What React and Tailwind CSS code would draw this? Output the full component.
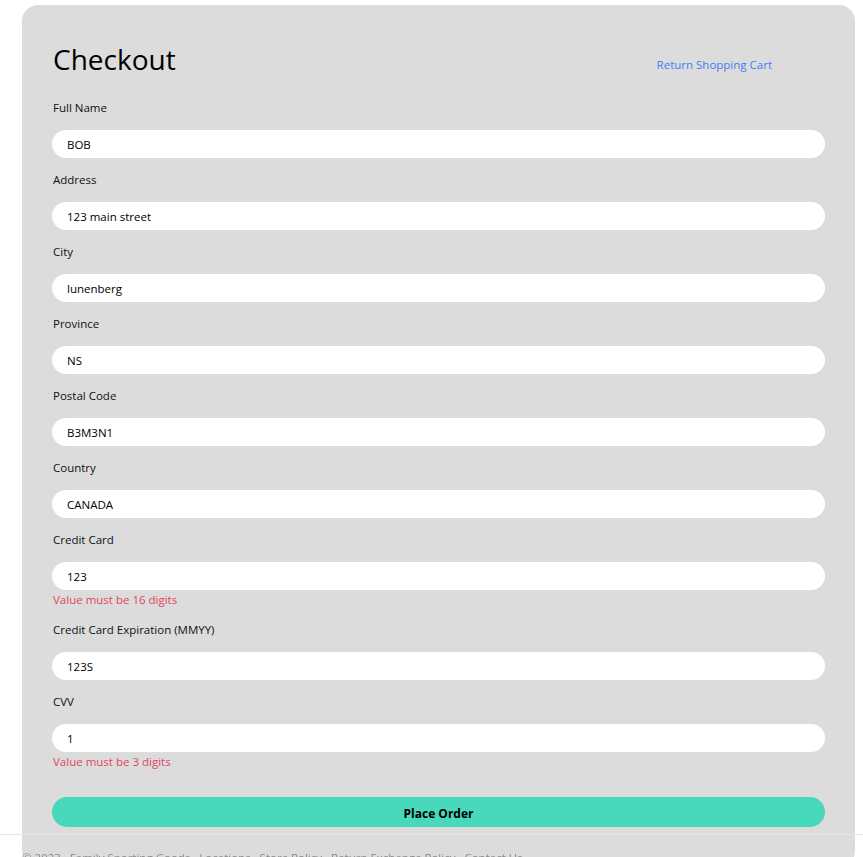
const FIELDS = [
  { label: 'Full Name', value: 'BOB' },
  { label: 'Address', value: '123 main street' },
  { label: 'City', value: 'lunenberg' },
  { label: 'Province', value: 'NS' },
  { label: 'Postal Code', value: 'B3M3N1' },
  { label: 'Country', value: 'CANADA' },
  { label: 'Credit Card', value: '123', error: 'Value must be 16 digits' },
  { label: 'Credit Card Expiration (MMYY)', value: '123S' },
  { label: 'CVV', value: '1', error: 'Value must be 3 digits' },
];

function Field({ label, value, error }) {
  return (
    <div className="flex flex-col">
      <label className="h-4 text-[11.5px] leading-4 text-[#111] pl-px">{label}</label>
      <input
        type="text"
        defaultValue={value}
        className="mt-[14px] h-7 w-full rounded-full bg-white px-[15px] text-[11.5px] text-black outline-none"
      />
      {error && <p className="mt-[2px] h-4 text-[11.5px] leading-4 text-[#e0455f] pl-px">{error}</p>}
    </div>
  );
}

export default function App() {
  return (
    <div className="min-h-screen bg-white font-['Open_Sans',sans-serif]">
      <div className="ml-[22px] mr-[8px] mt-[5px] rounded-[16px] bg-[#dcdcdc] px-[30px] pt-[34px] pb-[40px]">
        <div className="flex h-10 items-center justify-between">
          <h1 className="pl-px text-[28px] font-normal leading-10 text-black">Checkout</h1>
          <a href="#" className="mr-[53px] mt-3 text-[11.5px] text-[#3d7cf5]">
            Return Shopping Cart
          </a>
        </div>
        <form className="mt-[21px] flex flex-col gap-[14px]" onSubmit={(e) => e.preventDefault()}>
          {FIELDS.map((f) => (
            <Field key={f.label} {...f} />
          ))}
          <button
            type="submit"
            className="mt-[13px] h-[30px] w-full rounded-full bg-[#48d8bb] pt-1 text-[12px] font-bold text-black"
          >
            Place Order
          </button>
        </form>
      </div>

      <footer className="fixed inset-x-0 top-[834px] border-t border-[#e6e6e6] pl-[22px] pt-[15px] text-[11.5px] leading-4 text-[#8a8a8a]">
        © 2023 · Family Sporting Goods · Locations · Store Policy · Return Exchange Policy · Contact Us
      </footer>
    </div>
  );
}
